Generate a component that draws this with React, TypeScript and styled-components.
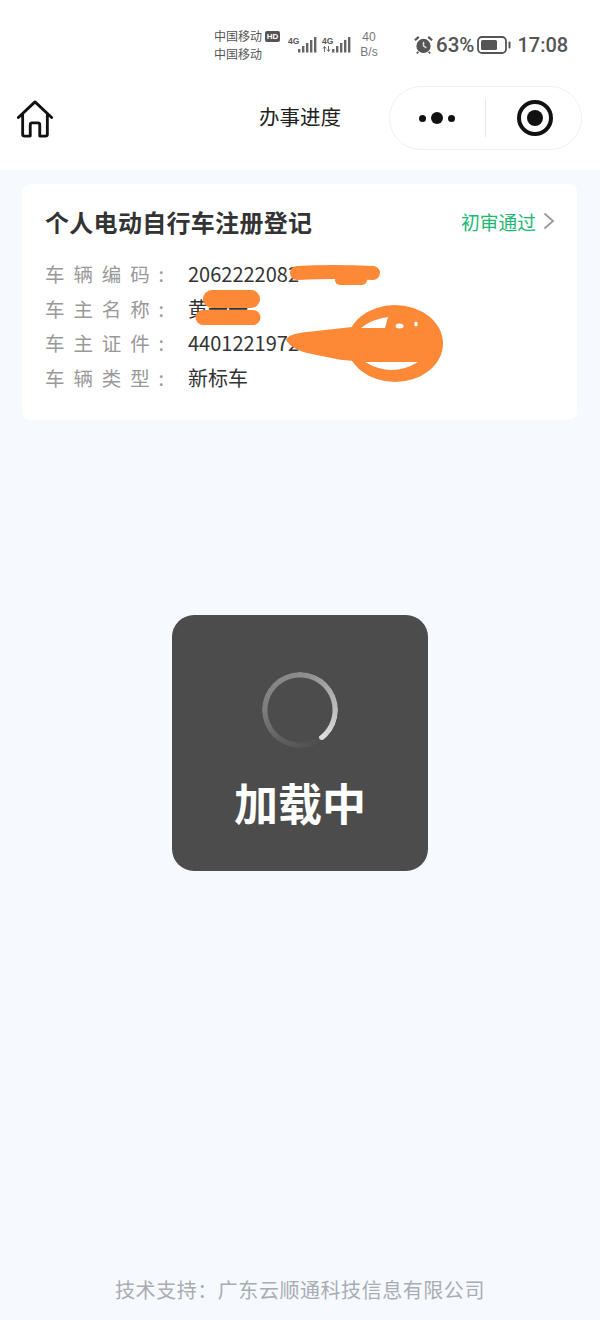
import React, { FC, ReactElement } from 'react';
import styled, { createGlobalStyle } from 'styled-components';

const GlobalStyle = createGlobalStyle`
  html, body {
    margin: 0;
    padding: 0;
    background: #f6faff;
    font-family: "Noto Sans CJK SC", "Noto Sans", sans-serif;
  }
  * {
    box-sizing: border-box;
  }
`;

const rows = [
  { label: '车辆编码', value: '2062222082' },
  { label: '车主名称', value: '黄一一' },
  { label: '车主证件', value: '4401221972' },
  { label: '车辆类型', value: '新标车' },
];

const SignalBars: FC<{}> = (): ReactElement => (
  <svg width='19' height='18' viewBox='0 0 19 18'>
    <g fill='#666'>
      <rect x='0' y='13' width='2.4' height='3.5' />
      <rect x='4' y='10' width='2.4' height='6.5' />
      <rect x='8' y='7' width='2.4' height='9.5' />
      <rect x='12' y='4' width='2.4' height='12.5' />
      <rect x='16' y='1' width='2.4' height='15.5' />
    </g>
  </svg>
);

const DataArrows: FC<{}> = (): ReactElement => (
  <svg width='9' height='6' viewBox='0 0 9 6'>
    <path d='M2.5 6 V1 M1 2.5 L2.5 0.5 L4 2.5 M6.5 0 V5 M5 3.5 L6.5 5.5 L8 3.5' fill='none' stroke='#666' strokeWidth='1' />
  </svg>
);

const AlarmIcon: FC<{}> = (): ReactElement => (
  <svg width='19' height='20' viewBox='0 0 20 20'>
    <circle cx='10' cy='11' r='7.5' fill='#555' />
    <path d='M10 6.5 V11 L13 13' fill='none' stroke='#ddd' strokeWidth='1.6' />
    <path d='M1 5 L5 1.5 M19 5 L15 1.5' stroke='#555' strokeWidth='2.4' />
    <path d='M4.5 17 L3 19 M15.5 17 L17 19' stroke='#555' strokeWidth='1.8' />
  </svg>
);

const BatteryIcon: FC<{}> = (): ReactElement => (
  <svg width='34' height='18' viewBox='0 0 34 18'>
    <rect x='1' y='1' width='28' height='16' rx='4' fill='none' stroke='#555' strokeWidth='1.8' />
    <rect x='4' y='4' width='16' height='10' rx='1.5' fill='#555' />
    <rect x='31.5' y='5.5' width='2' height='7' rx='1' fill='#555' />
  </svg>
);

const HomeIcon: FC<{}> = (): ReactElement => (
  <svg width='38' height='38' viewBox='0 0 40 40'>
    <path
      d='M2.5 18.5 L20 2 L37.5 18.5 M7 15 V36 Q7 38 9 38 H15 V26 Q15 24 17 24 H23 Q25 24 25 26 V38 H31 Q33 38 33 36 V15'
      fill='none'
      stroke='#111'
      strokeWidth='3'
      strokeLinecap='round'
      strokeLinejoin='round'
    />
  </svg>
);

const Chevron: FC<{}> = (): ReactElement => (
  <svg width='12' height='18' viewBox='0 0 12 18'>
    <path d='M1.5 1.5 L10 9 L1.5 16.5' fill='none' stroke='#999' strokeWidth='1.8' />
  </svg>
);

// orange scribbles that hide the personal data, in card coordinates
const Scribbles: FC<{}> = (): ReactElement => (
  <ScribbleLayer width='555' height='236' viewBox='0 0 555 236'>
    <g fill='none' stroke='#fd8936' strokeLinecap='round'>
      <path d='M275 89 Q310 87 351 89' strokeWidth='14' />
      <path d='M318 96 L340 96' strokeWidth='10' />
      <path d='M190 115 L229 115' strokeWidth='18' />
      <path d='M181 133.5 L231 133.5' strokeWidth='15' />
    </g>
    <ellipse cx='373' cy='159.5' rx='48' ry='38.5' fill='#fd8936' />
    <path
      d='M264 156 Q266 150 285 148 L330 143 L345 143 L345 178 L320 176 Q300 172 290 170 Q270 166 264 156 Z'
      fill='#fd8936'
    />
    <g fill='#fff'>
      <path d='M339 144 Q350 135 366 133 L363 144 Z' />
      <path d='M343 178 L396 178 Q370 194 343 178 Z' />
      <ellipse cx='377.5' cy='142' rx='4' ry='2.5' />
      <ellipse cx='394' cy='140' rx='1.8' ry='2.5' />
    </g>
  </ScribbleLayer>
);

const App: FC<{}> = (): ReactElement => {
  return (
    <Page>
      <GlobalStyle />
      <Header>
        <StatusBar>
          <Carriers>
            <CarrierLine>
              中国移动<HdBadge>HD</HdBadge>
            </CarrierLine>
            <CarrierLine>中国移动</CarrierLine>
          </Carriers>
          <SignalGroup>
            <NetworkTag>4G</NetworkTag>
            <SignalBars />
          </SignalGroup>
          <SignalGroup>
            <NetworkTag>
              4G
              <DataArrows />
            </NetworkTag>
            <SignalBars />
          </SignalGroup>
          <Speed>
            <span>40</span>
            <span>B/s</span>
          </Speed>
          <SystemGroup>
            <AlarmIcon />
            <StatusText>63%</StatusText>
            <BatteryIcon />
            <Clock>17:08</Clock>
          </SystemGroup>
        </StatusBar>
        <NavBar>
          <HomeButton>
            <HomeIcon />
          </HomeButton>
          <NavTitle>办事进度</NavTitle>
          <Capsule>
            <Dots>
              <Dot $size={7} />
              <Dot $size={12} />
              <Dot $size={7} />
            </Dots>
            <CapsuleDivider />
            <TargetIcon />
          </Capsule>
        </NavBar>
      </Header>

      <Card>
        <CardHead>
          <CardTitle>个人电动自行车注册登记</CardTitle>
          <CardStatus>
            初审通过
            <Chevron />
          </CardStatus>
        </CardHead>
        <InfoList>
          {rows.map(row => (
            <InfoRow key={row.label}>
              <InfoLabel>
                {row.label.split('').map((char, i) => (
                  <span key={i}>{char}</span>
                ))}
                <span>:</span>
              </InfoLabel>
              <InfoValue>{row.value}</InfoValue>
            </InfoRow>
          ))}
        </InfoList>
        <Scribbles />
      </Card>

      <Toast>
        <Spinner>
          <SpinnerHead />
        </Spinner>
        <ToastText>加载中</ToastText>
      </Toast>

      <Footer>技术支持：广东云顺通科技信息有限公司</Footer>
    </Page>
  );
};

export default App;

const Page = styled.div`
  position: relative;
  display: flex;
  flex-direction: column;
  width: 600px;
  height: 1320px;
  overflow: hidden;
  background: #f6faff;
`;

const Header = styled.header`
  background: #fff;
  height: 170px;
`;

const StatusBar = styled.div`
  display: flex;
  align-items: center;
  height: 78px;
  padding: 12px 0 0 214px;
  color: #555;
`;

const Carriers = styled.div`
  display: flex;
  flex-direction: column;
  width: 74px;
  font-size: 12px;
  line-height: 18px;
`;

const CarrierLine = styled.div`
  display: flex;
  align-items: center;
  gap: 3px;
  white-space: nowrap;
`;

const HdBadge = styled.span`
  display: inline-block;
  width: 15px;
  height: 11px;
  border-radius: 2px;
  background: #555;
  color: #fff;
  font-family: "Liberation Sans", sans-serif;
  font-size: 8px;
  font-weight: 700;
  line-height: 11px;
  text-align: center;
`;

const SignalGroup = styled.div`
  display: flex;
  align-items: flex-end;
  width: 34px;
`;

const NetworkTag = styled.span`
  display: flex;
  flex-direction: column;
  width: 10px;
  font-family: "Liberation Sans", sans-serif;
  font-size: 8.5px;
  font-weight: 700;
  line-height: 10px;
  align-self: flex-start;
`;

const Speed = styled.div`
  display: flex;
  flex-direction: column;
  align-items: center;
  width: 28px;
  margin-left: -1px;
  font-family: "Liberation Sans", sans-serif;
  font-size: 12px;
  line-height: 15px;
  color: #777;
`;

const SystemGroup = styled.div`
  display: flex;
  align-items: center;
  margin-left: 31px;
`;

const StatusText = styled.span`
  margin: 0 3px 0 3px;
  font-family: "Roboto", sans-serif;
  font-size: 20.5px;
  font-weight: 500;
`;

const Clock = styled.span`
  margin-left: 6px;
  font-family: "Roboto", sans-serif;
  font-size: 20px;
  font-weight: 500;
`;

const NavBar = styled.nav`
  display: grid;
  grid-template-columns: 1fr auto 1fr;
  align-items: center;
  height: 92px;
  padding: 0 18px 12px 16px;
`;

const HomeButton = styled.div`
  display: flex;
  padding-top: 2px;
`;

const NavTitle = styled.h1`
  margin: -4px 0 0 2px;
  color: #222;
  font-size: 20.5px;
  font-weight: 400;
`;

const Capsule = styled.div`
  justify-self: end;
  display: flex;
  align-items: center;
  width: 193px;
  height: 64px;
  padding-left: 29px;
  border: 1.5px solid #f0f0f0;
  border-radius: 32px;
  background: #fff;
`;

const Dots = styled.div`
  display: flex;
  align-items: center;
  gap: 5px;
  width: 66px;
`;

const Dot = styled.span<{ $size: number }>`
  width: ${props => props.$size}px;
  height: ${props => props.$size}px;
  border-radius: 50%;
  background: #111;
`;

const CapsuleDivider = styled.span`
  width: 1px;
  height: 38px;
  background: #e6e6e6;
`;

const TargetIcon = styled.span`
  position: relative;
  width: 36px;
  height: 36px;
  margin-left: 31px;
  border: 4.5px solid #111;
  border-radius: 50%;

  &::after {
    content: '';
    position: absolute;
    inset: 6px;
    border-radius: 50%;
    background: #111;
  }
`;

const Card = styled.section`
  position: relative;
  width: 555px;
  height: 236px;
  margin: 14px 0 0 22px;
  padding: 17px 22px 0 23px;
  border-radius: 8px;
  background: #fff;
`;

const CardHead = styled.div`
  display: flex;
  align-items: center;
  justify-content: space-between;
  height: 40px;
`;

const CardTitle = styled.h2`
  margin: 0;
  color: #333;
  font-size: 24px;
  font-weight: 700;
  letter-spacing: 0.3px;
`;

const CardStatus = styled.div`
  display: flex;
  align-items: center;
  gap: 7px;
  color: #1bb872;
  font-size: 18.75px;
`;

const InfoList = styled.div`
  margin-top: 15px;
`;

const InfoRow = styled.div`
  display: flex;
  align-items: center;
  height: 34.7px;
`;

const InfoLabel = styled.div`
  display: flex;
  justify-content: space-between;
  width: 119px;
  margin-right: 24px;
  color: #999;
  font-size: 19.5px;
`;

const InfoValue = styled.div`
  color: #333;
  font-size: 20px;
`;

const ScribbleLayer = styled.svg`
  position: absolute;
  top: 0;
  left: 0;
`;

const Toast = styled.div`
  position: absolute;
  top: 615px;
  left: 172px;
  display: flex;
  flex-direction: column;
  align-items: center;
  width: 256px;
  height: 256px;
  padding-top: 57px;
  border-radius: 22px;
  background: #4c4c4c;
`;

const Spinner = styled.div`
  position: relative;
  width: 76px;
  height: 76px;
  border-radius: 50%;
  background: conic-gradient(from 142deg, #4c4c4c 0deg, #5f5f5f 70deg, #7e7e7e 130deg, #8f8f8f 230deg, #dedede 360deg);
  -webkit-mask: radial-gradient(circle, transparent 32px, #000 33px);
  mask: radial-gradient(circle, transparent 32px, #000 33px);
`;

const SpinnerHead = styled.span`
  position: absolute;
  left: 57px;
  top: 62px;
  width: 6px;
  height: 6px;
  border-radius: 50%;
  background: #dedede;
`;

const ToastText = styled.div`
  margin-top: 22px;
  color: #fff;
  font-size: 44px;
  font-weight: 700;
  line-height: 64px;
`;

const Footer = styled.footer`
  margin-top: auto;
  padding-bottom: 15px;
  color: #a9acb1;
  font-size: 20px;
  letter-spacing: 0.55px;
  line-height: 30px;
  text-align: center;
`;
